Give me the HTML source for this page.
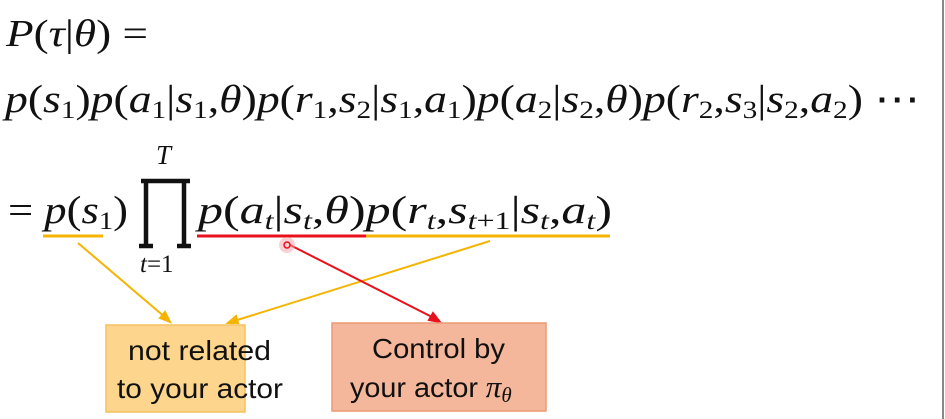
<!DOCTYPE html>
<html><head><meta charset="utf-8"><style>
html,body{margin:0;padding:0;background:#fff;width:945px;height:419px;overflow:hidden}
svg{display:block}
text{font-family:"Liberation Serif",serif;fill:#111}
.i{font-style:italic}
.s{font-size:25px}
.box{font-family:"Liberation Sans",sans-serif;font-size:28px;fill:#111}
</style></head><body>
<svg width="945" height="419" viewBox="0 0 945 419">
<rect x="0" y="0" width="945" height="419" fill="#fff"/>
<line x1="943" y1="0" x2="943" y2="419" stroke="#888" stroke-width="2"/>
<text x="6" y="46" font-size="38" textLength="142" lengthAdjust="spacingAndGlyphs"><tspan class="i">P</tspan>(<tspan class="i">τ</tspan>|<tspan class="i">θ</tspan>) =</text>
<text x="5" y="112" font-size="39" textLength="915" lengthAdjust="spacingAndGlyphs"><tspan class="i">p</tspan>(<tspan class="i">s</tspan><tspan class="s" dy="6">1</tspan><tspan dy="-6">)</tspan><tspan class="i">p</tspan>(<tspan class="i">a</tspan><tspan class="s" dy="6">1</tspan><tspan dy="-6">|</tspan><tspan class="i">s</tspan><tspan class="s" dy="6">1</tspan><tspan dy="-6">,</tspan><tspan class="i">θ</tspan>)<tspan class="i">p</tspan>(<tspan class="i">r</tspan><tspan class="s" dy="6">1</tspan><tspan dy="-6">,</tspan><tspan class="i">s</tspan><tspan class="s" dy="6">2</tspan><tspan dy="-6">|</tspan><tspan class="i">s</tspan><tspan class="s" dy="6">1</tspan><tspan dy="-6">,</tspan><tspan class="i">a</tspan><tspan class="s" dy="6">1</tspan><tspan dy="-6">)</tspan><tspan class="i">p</tspan>(<tspan class="i">a</tspan><tspan class="s" dy="6">2</tspan><tspan dy="-6">|</tspan><tspan class="i">s</tspan><tspan class="s" dy="6">2</tspan><tspan dy="-6">,</tspan><tspan class="i">θ</tspan>)<tspan class="i">p</tspan>(<tspan class="i">r</tspan><tspan class="s" dy="6">2</tspan><tspan dy="-6">,</tspan><tspan class="i">s</tspan><tspan class="s" dy="6">3</tspan><tspan dy="-6">|</tspan><tspan class="i">s</tspan><tspan class="s" dy="6">2</tspan><tspan dy="-6">,</tspan><tspan class="i">a</tspan><tspan class="s" dy="6">2</tspan><tspan dy="-6">) ⋯</tspan></text>
<text x="8" y="223" font-size="39" textLength="120" lengthAdjust="spacingAndGlyphs">= <tspan class="i">p</tspan>(<tspan class="i">s</tspan><tspan class="s" dy="6">1</tspan><tspan dy="-6">)</tspan></text>
<path d="M141 181 H190 M146 181 V246 M184 181 V246 M139 246 H153 M177 246 H191" stroke="#111" stroke-width="4.5" fill="none"/>
<text class="i" x="156" y="164" font-size="27">T</text>
<text x="140" y="272" font-size="25"><tspan class="i">t</tspan>=1</text>
<text x="198" y="223" font-size="39" textLength="414" lengthAdjust="spacingAndGlyphs"><tspan class="i">p</tspan>(<tspan class="i">a</tspan><tspan class="s i" dy="6">t</tspan><tspan dy="-6">|</tspan><tspan class="i">s</tspan><tspan class="s i" dy="6">t</tspan><tspan dy="-6">,</tspan><tspan class="i">θ</tspan>)<tspan class="i">p</tspan>(<tspan class="i">r</tspan><tspan class="s i" dy="6">t</tspan><tspan dy="-6">,</tspan><tspan class="i">s</tspan><tspan class="s" dy="6"><tspan class="i">t</tspan>+1</tspan><tspan dy="-6">|</tspan><tspan class="i">s</tspan><tspan class="s i" dy="6">t</tspan><tspan dy="-6">,</tspan><tspan class="i">a</tspan><tspan class="s i" dy="6">t</tspan><tspan dy="-6">)</tspan></text>
<line x1="43" y1="236" x2="103" y2="236" stroke="#f4b400" stroke-width="3"/>
<line x1="197" y1="236" x2="366" y2="236" stroke="#e8101c" stroke-width="3"/>
<line x1="366" y1="236" x2="610" y2="236" stroke="#f4b400" stroke-width="3"/>
<g stroke="#f4b400" stroke-width="2" fill="#f4b400">
<line x1="78" y1="243" x2="166" y2="318"/>
<polygon points="170,322 160,318 165,312"/>
<line x1="490" y1="241" x2="234" y2="321"/>
<polygon points="228,323 236,316 238,323"/>
</g>
<g stroke="#e8101c" stroke-width="2" fill="#e8101c">
<line x1="290" y1="245" x2="434" y2="318"/>
<polygon points="440,322 429,320 433,313"/>
</g>
<circle cx="287" cy="245" r="8" fill="#f7a0a8" opacity="0.5"/>
<circle cx="287" cy="245" r="3" fill="none" stroke="#e8101c" stroke-width="1.5"/>
<rect x="106" y="325" width="139" height="87" fill="#fdd58c" stroke="#f5c060" stroke-width="1.5"/>
<text class="box" x="128" y="360" textLength="143" lengthAdjust="spacingAndGlyphs">not related</text>
<text class="box" x="117" y="398" textLength="166" lengthAdjust="spacingAndGlyphs">to your actor</text>
<rect x="332" y="323" width="214" height="88" fill="#f4b79b" stroke="#eb9a74" stroke-width="1.5"/>
<text class="box" x="372" y="358" textLength="133" lengthAdjust="spacingAndGlyphs">Control by</text>
<text class="box" x="350" y="397"><tspan textLength="128" lengthAdjust="spacingAndGlyphs">your actor</tspan> <tspan font-family="Liberation Serif" font-style="italic" font-size="31">π</tspan><tspan font-family="Liberation Serif" font-style="italic" font-size="21" dy="5">θ</tspan></text>
</svg>
</body></html>
